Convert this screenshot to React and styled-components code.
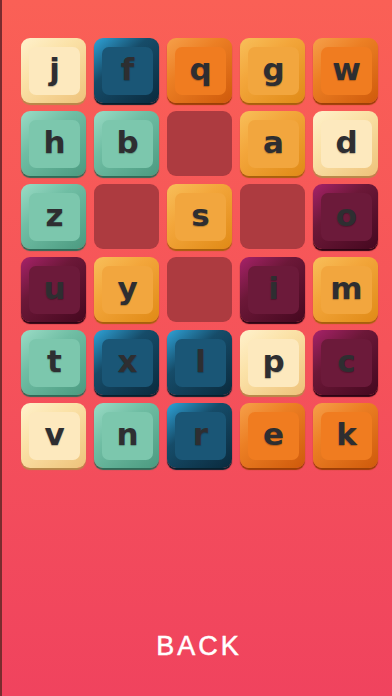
import React from "react";
import styled, { createGlobalStyle } from "styled-components";

const GlobalStyle = createGlobalStyle`
  html, body {
    margin: 0;
    padding: 0;
  }
  body {
    width: 392px;
    height: 696px;
    overflow: hidden;
  }
`;

const palette = {
  cream: { light: "#fff1cc", mid: "#fbe2a8", dark: "#eec27a", face: "#fde9be", edge: "#b8894a" },
  blue: { light: "#2fa3d8", mid: "#164c69", dark: "#0a2a3d", face: "#1a5676", edge: "#06202e" },
  orange: { light: "#f6a04a", mid: "#ec7f24", dark: "#cf5a0b", face: "#f07c20", edge: "#9c3f06" },
  gold: { light: "#f8bf5a", mid: "#f3a63b", dark: "#e08a16", face: "#f2a63e", edge: "#a8600c" },
  teal: { light: "#9bdcc6", mid: "#70bea4", dark: "#4b9a80", face: "#7cc7ad", edge: "#2f6b58" },
  plum: { light: "#a8226a", mid: "#6c1838", dark: "#45081f", face: "#6c1a3a", edge: "#2e0414" },
};

const rows = [
  [["j", "cream"], ["f", "blue"], ["q", "orange"], ["g", "gold"], ["w", "orange"]],
  [["h", "teal"], ["b", "teal"], null, ["a", "gold"], ["d", "cream"]],
  [["z", "teal"], null, ["s", "gold"], null, ["o", "plum"]],
  [["u", "plum"], ["y", "gold"], null, ["i", "plum"], ["m", "gold"]],
  [["t", "teal"], ["x", "blue"], ["l", "blue"], ["p", "cream"], ["c", "plum"]],
  [["v", "cream"], ["n", "teal"], ["r", "blue"], ["e", "orange"], ["k", "orange"]],
];

const Screen = styled.div`
  box-sizing: border-box;
  width: 392px;
  height: 696px;
  display: flex;
  flex-direction: column;
  align-items: stretch;
  border-left: 2px solid #7a2c2e;
  background: linear-gradient(180deg, #fa6056 0%, #f5535a 50%, #f0435e 100%);
`;

const Board = styled.div`
  display: grid;
  grid-template-columns: repeat(5, 65px);
  grid-auto-rows: 65px;
  gap: 8px;
  padding: 38px 0 0 19px;
`;

const Slot = styled.div`
  border-radius: 9px;
  background: #ad3b40;
`;

const Tile = styled.div`
  box-sizing: border-box;
  border-radius: 9px;
  padding: 9px 6px 8px 8px;
  display: flex;
  background: linear-gradient(
    140deg,
    ${(p) => p.$c.light} 0%,
    ${(p) => p.$c.mid} 38%,
    ${(p) => p.$c.dark} 100%
  );
  box-shadow: 0 2px 1px ${(p) => p.$c.edge};
`;

const Face = styled.div`
  flex: 1;
  border-radius: 7px;
  background: ${(p) => p.$c.face};
  display: flex;
  align-items: center;
  justify-content: center;
  font-family: "DejaVu Sans", "Liberation Sans", sans-serif;
  font-weight: bold;
  font-size: 31px;
  line-height: 1;
  color: #2e2e31;
  text-shadow: 0 1px 1px rgba(0, 0, 0, 0.25);
  padding-bottom: 3px;
`;

const Back = styled.div`
  margin-top: auto;
  padding: 0 0 36px 4px;
  text-align: center;
  font-family: "Liberation Sans", Arial, sans-serif;
  font-size: 27px;
  line-height: 27px;
  letter-spacing: 3px;
  color: #ffffff;
  -webkit-text-stroke: 0.5px #ffffff;
`;

export default function App() {
  return (
    <>
      <GlobalStyle />
      <Screen>
        <Board>
          {rows.flatMap((row, r) =>
            row.map((cell, c) =>
              cell ? (
                <Tile key={`${r}-${c}`} $c={palette[cell[1]]}>
                  <Face $c={palette[cell[1]]}>{cell[0]}</Face>
                </Tile>
              ) : (
                <Slot key={`${r}-${c}`} />
              )
            )
          )}
        </Board>
        <Back>BACK</Back>
      </Screen>
    </>
  );
}
